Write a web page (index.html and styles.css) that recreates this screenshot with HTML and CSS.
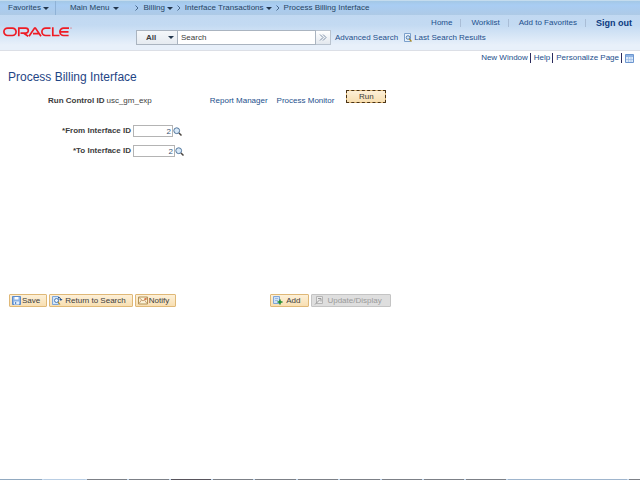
FILE: index.html
```html
<!DOCTYPE html>
<html lang="en">
<head>
  <meta charset="UTF-8">
  <meta name="viewport" content="width=device-width, initial-scale=1.0">
  <title>Process Billing Interface</title>
  <link rel="stylesheet" href="styles.css">
</head>
<body>
  <header class="header">
    <!-- Breadcrumb -->
    <nav class="breadcrumb">
      <a href="#" class="crumb favorites">Favorites <span class="caret"></span></a>
      <a href="#" class="crumb main-menu">Main Menu <span class="caret"></span></a>
      <svg class="chevron" viewBox="0 0 4 6"><path d="M.5 .5 3 3 .5 5.5"/></svg>
      <a href="#" class="crumb">Billing <span class="caret"></span></a>
      <svg class="chevron" viewBox="0 0 4 6"><path d="M.5 .5 3 3 .5 5.5"/></svg>
      <a href="#" class="crumb">Interface Transactions <span class="caret"></span></a>
      <svg class="chevron" viewBox="0 0 4 6"><path d="M.5 .5 3 3 .5 5.5"/></svg>
      <a href="#" class="crumb">Process Billing Interface</a>
    </nav>

    <!-- Logo, search and account links -->
    <div class="banner">
      <a href="#" class="logo" aria-label="Oracle">
        <svg viewBox="0 0 69 10" width="69" height="10">
          <g fill="none" stroke="#ee1c25" stroke-width="1.7">
            <path d="M4.600 1.100h4.800a3.700 3.700 0 0 1 0 7.400H4.600a3.700 3.700 0 0 1 0-7.400z"/>
            <path d="M15.800 9.300V1.100h7a2.500 2.500 0 0 1 0 5H17.500M20.500 6.100l4.700 3.200"/>
            <path d="M26 9.300 31.600 1.100h.8L38 9.300M30 6.700h5.500"/>
            <path d="M47.500 8.500H42.600a3.700 3.700 0 0 1 0-7.400h4.900"/>
            <path d="M49.800 .3V8.500H56.500"/>
            <path d="M66 1.100H60.600a3.700 3.700 0 0 0 0 7.400h5M57.500 4.800h8"/>
          </g>
          <circle cx="68" cy="1" r=".5" fill="#ee1c25"/>
        </svg>
      </a>
      <div class="banner-main">
        <nav class="account">
          <a href="#">Home</a>
          <a href="#">Worklist</a>
          <a href="#">Add to Favorites</a>
          <a href="#" class="sign-out">Sign out</a>
        </nav>
        <form class="search">
          <span class="scope">
            <select aria-label="Search scope"><option>All</option></select>
            <span class="caret"></span>
          </span>
          <input type="text" class="search-text" value="Search" aria-label="Search">
          <button type="button" class="go" aria-label="Go">
            <svg viewBox="0 0 8 7" width="8" height="7"><path d="M1 .5 4 3.500 1 6.500M4 .5 7 3.500 4 6.500" fill="none" stroke="#7d8ea6"/></svg>
          </button>
          <a href="#" class="advanced">Advanced Search</a>
          <a href="#" class="last-results">
            <svg viewBox="0 0 8 9" width="8" height="9"><path d="M.5 .5h6v8h-6z" fill="#e9f2fb" stroke="#7ba0cc"/><circle cx="4" cy="4.500" r="1.800" fill="#d6e8fa" stroke="#39669b" stroke-width=".8"/><path d="M5.300 6 7.500 8.500" stroke="#b08a1c" stroke-width="1.200"/></svg>
            Last Search Results
          </a>
        </form>
      </div>
    </div>
  </header>

  <main class="content">
    <nav class="page-links">
      <a href="#">New Window</a>
      <a href="#">Help</a>
      <a href="#">Personalize Page</a>
      <a href="#" aria-label="Page grid">
        <svg viewBox="0 0 9 9" width="9" height="9"><path d="M.5 .5h8v8h-8z" fill="#dceafa" stroke="#6d96cf"/><path d="M1 1h7v2H1z" fill="#8fb4e4"/><path d="M1 5.500h7M3.500 3v5M6 3v5" stroke="#9dbce4" stroke-width=".7"/></svg>
      </a>
    </nav>

    <h1>Process Billing Interface</h1>

    <!-- Run control -->
    <div class="run-row">
      <b>Run Control ID</b>
      <span class="run-id">usc_gm_exp</span>
      <a href="#" class="report">Report Manager</a>
      <a href="#" class="monitor">Process Monitor</a>
      <button type="button" class="button run">Run</button>
    </div>

    <!-- Interface range -->
    <div class="field">
      <label for="fromId">*From Interface ID</label>
      <input type="text" id="fromId" value="2">
      <button type="button" class="lookup" aria-label="Look up From Interface ID">
        <svg viewBox="0 0 9 9" width="9" height="9"><circle cx="3.700" cy="3.700" r="2.900" fill="#d8e9f8" stroke="#54779d"/><path d="M6 6 8.500 8.500" stroke="#4b4640" stroke-width="1.500"/></svg>
      </button>
    </div>
    <div class="field">
      <label for="toId">*To Interface ID</label>
      <input type="text" id="toId" class="wide" value="2">
      <button type="button" class="lookup" aria-label="Look up To Interface ID">
        <svg viewBox="0 0 9 9" width="9" height="9"><circle cx="3.700" cy="3.700" r="2.900" fill="#d8e9f8" stroke="#54779d"/><path d="M6 6 8.500 8.500" stroke="#4b4640" stroke-width="1.500"/></svg>
      </button>
    </div>

    <!-- Toolbar -->
    <div class="toolbar">
      <div class="group">
        <button type="button" class="button">
          <svg viewBox="0 0 9 9" width="9" height="9"><path d="M.5 .5h8v8h-8z" fill="#8db4e6" stroke="#5d8bc9"/><path d="M2.500 1h4v2.500h-4z" fill="#fff"/><path d="M2 5.500h5v3H2z" fill="#e4effb"/><path d="M3 6h1.200v2H3z" fill="#5d8bc9"/></svg>
          Save
        </button>
        <button type="button" class="button">
          <svg class="search-icon" viewBox="0 0 11 9" width="11" height="9"><path d="M.5 .5h6v8h-6z" fill="#d3e5f8" stroke="#7fa6d8"/><circle cx="4.500" cy="4.500" r="2" fill="#eef6fd" stroke="#3f6fae" stroke-width=".9"/><path d="M6 6 8 8.500" stroke="#b8901f" stroke-width="1.200"/><path d="M6 1.500q2.500-.5 2.800 2" fill="none" stroke="#26538f"/><path d="M7.200 3h3.300L8.900 5z" fill="#26538f"/></svg>
          Return to Search
        </button>
        <button type="button" class="button">
          <svg viewBox="0 0 10 9" width="10" height="9"><path d="M.5 1h9v7h-9z" fill="#fbf3d8" stroke="#b39357"/><path d="M1 1.500 5 5l4-3.500M1 7.500 3.500 4M9 7.500 6.500 4" fill="none" stroke="#bd8a5c" stroke-width=".8"/><path d="M6.500 2h2v2h-2z" fill="#d9774f"/></svg>
          Notify
        </button>
      </div>
      <div class="group">
        <button type="button" class="button spaced">
          <svg viewBox="0 0 10 9" width="10" height="9"><path d="M.5 .5h6v7h-6z" fill="#cfe1f7" stroke="#7fa6d8"/><path d="M2 2.500h3M2 4.500h3" stroke="#8db0de" stroke-width=".8"/><path d="M7 3.500v5M4.500 6h5" stroke="#1d8a2c" stroke-width="1.500"/></svg>
          Add
        </button>
        <button type="button" class="button spaced" disabled>
          <svg viewBox="0 0 10 9" width="10" height="9"><path d="M2.500 .5h6v7h-6z" fill="#e9e9e9" stroke="#b5b5b5"/><path d="M1 8.500 6 3.500M4 2.500h3v3" fill="none" stroke="#999"/></svg>
          Update/Display
        </button>
      </div>
    </div>
  </main>

  <!-- Top edge of the taskbar -->
  <footer class="taskbar">
    <i class="start"></i><i class="quick"></i><i></i><i></i><i class="active"></i><i></i><i></i><i></i><i></i><i></i><i></i><i></i><i class="tray"></i><i class="corner"></i>
  </footer>
</body>
</html>
```
FILE: styles.css
```css
* {
  box-sizing: border-box;
}
body {
  display: flex;
  flex-direction: column;
  min-height: 100vh;
  margin: 0;
  background-color: #fff;
  color: #3c3c3c;
  font-family: "Liberation Sans", Arial, sans-serif;
  font-size: 8px;
  line-height: 10px;
}
a {
  color: #1c4f8c;
  text-decoration: none;
}
a:hover {
  text-decoration: underline;
}
input, select, button {
  margin: 0;
  font: inherit;
  color: inherit;
}
svg {
  flex: none;
}

/* Header */
.header {
  border-bottom: 1px solid #dcdfe6;
  background: linear-gradient(#bfd7f1 0, #c3daf2 50%, #e8f0fa 90%);
}
.breadcrumb {
  display: flex;
  align-items: center;
  gap: 4px;
  height: 15px;
  border-top: 1px solid #c4dcee;
  background: linear-gradient(#a3c8e6, #a9cdf3 30%, #aecae6);
}
.crumb {
  display: flex;
  align-items: center;
  gap: 2px;
  color: #254463;
  white-space: nowrap;
}
.favorites {
  height: 14px;
  padding: 0 6px 0 8px;
  border-right: 1px solid #8fb2d6;
}
.main-menu {
  gap: 4px;
  padding: 0 12px 0 10px;
}
.caret {
  border: 3px solid transparent;
  border-top-color: #22364d;
  border-bottom: 0;
}
.chevron {
  width: 4px;
  height: 6px;
  fill: none;
  stroke: #49698c;
}
.banner {
  display: flex;
  height: 35px;
}
.logo {
  width: 136px;
  padding: 12px 3px;
}
.logo svg {
  display: block;
}
.banner-main {
  flex: 1;
}
.account {
  display: flex;
  justify-content: flex-end;
  align-items: center;
  height: 15px;
  padding: 0 8px;
}
.account a {
  padding: 0 8px 0 10px;
  border-left: 1px solid #a9bdd6;
  line-height: 8px;
}
.account a:first-child {
  border-left: 0;
}
.account a:last-child {
  padding-right: 0;
}
.account .sign-out {
  color: #0d3a80;
  font-size: 9px;
  font-weight: bold;
}
.search {
  display: flex;
  align-items: center;
}
.scope {
  display: flex;
  position: relative;
}
.scope select {
  width: 42px;
  height: 15px;
  padding: 0 9px;
  border: 1px solid #aab4c0;
  border-radius: 0;
  background: linear-gradient(#f4f7fa, #e6ebf1);
  font-weight: bold;
  appearance: none;
}
.scope .caret {
  position: absolute;
  top: 6px;
  right: 4px;
}
.search-text {
  width: 138px;
  height: 15px;
  padding: 0 3px;
  border: 1px solid #aab4c0;
  border-left: 0;
  background-color: #fff;
}
.go {
  display: flex;
  align-items: center;
  justify-content: center;
  width: 15px;
  height: 15px;
  padding: 0;
  border: 1px solid #b9c3cf;
  border-left: 0;
  background: linear-gradient(#fff, #e3e8ee);
}
.advanced {
  margin-left: 4px;
}
.last-results {
  display: flex;
  align-items: center;
  gap: 2px;
  margin-left: 6px;
}

/* Page content */
.content {
  flex: 1;
}
.page-links {
  display: flex;
  justify-content: flex-end;
  align-items: center;
  height: 14px;
  padding-right: 6px;
}
.page-links a {
  display: flex;
  align-items: center;
  height: 10px;
  padding: 0 2px 0 3px;
}
.page-links a + a {
  border-left: 1px solid #2b2b5c;
}
.page-links a:last-child {
  padding-right: 0;
}
h1 {
  margin: 4px 8px;
  color: #1f4585;
  font-size: 12px;
  font-weight: normal;
  line-height: 16px;
}
.run-row {
  display: flex;
  align-items: center;
  height: 24px;
  margin-bottom: 8px;
  padding-left: 48px;
}
.run-id {
  margin-left: 2px;
}
.report {
  margin-left: 58px;
}
.monitor {
  margin-left: 9px;
}
.field {
  display: flex;
  align-items: center;
  height: 20px;
}
.field label {
  width: 131px;
  margin-right: 2px;
  font-weight: bold;
  text-align: right;
}
.field input {
  width: 40px;
  height: 12px;
  padding: 0 1px;
  border: 1px solid #b4b4b4;
  color: #3a5475;
  text-align: right;
}
.field .wide {
  width: 42px;
}
.lookup {
  display: flex;
  padding: 0;
  border: 0;
  background: none;
}

/* Buttons */
.button {
  display: flex;
  align-items: center;
  height: 13px;
  gap: 1px;
  padding: 0 6px 0 2px;
  border: 1px solid #dfb877;
  border-radius: 1px;
  background: linear-gradient(#fdf0d8, #f8dfb2);
  white-space: nowrap;
}
.button.spaced {
  gap: 3px;
  padding-right: 8px;
}
.button .search-icon {
  margin-right: 1px;
}
.button:disabled {
  border-color: #c4c4c4;
  background: #dedede;
  color: #9a9a9a;
}
.run {
  align-self: flex-start;
  justify-content: center;
  width: 40px;
  margin-top: 1px;
  margin-left: 12px;
  padding: 0;
  outline: 1px dashed #4a3214;
  outline-offset: -1px;
}
.toolbar {
  display: flex;
  gap: 94px;
  margin: 133px 9px 0;
}
.group {
  display: flex;
  gap: 2px;
}

/* Taskbar edge */
.taskbar {
  display: flex;
  height: 1px;
  gap: 2px;
  background-color: #c3d8ee;
}
.taskbar i {
  flex: 36;
  background-color: #7c8087;
}
.taskbar .start {
  flex: 38;
  background-color: #91a9c0;
}
.taskbar .quick {
  background-color: #b9cee4;
}
.taskbar .active {
  background-color: #57545c;
}
.taskbar .tray {
  flex: 106;
  background-color: #9fb5cd;
}
.taskbar .corner {
  flex: 10;
}
```
